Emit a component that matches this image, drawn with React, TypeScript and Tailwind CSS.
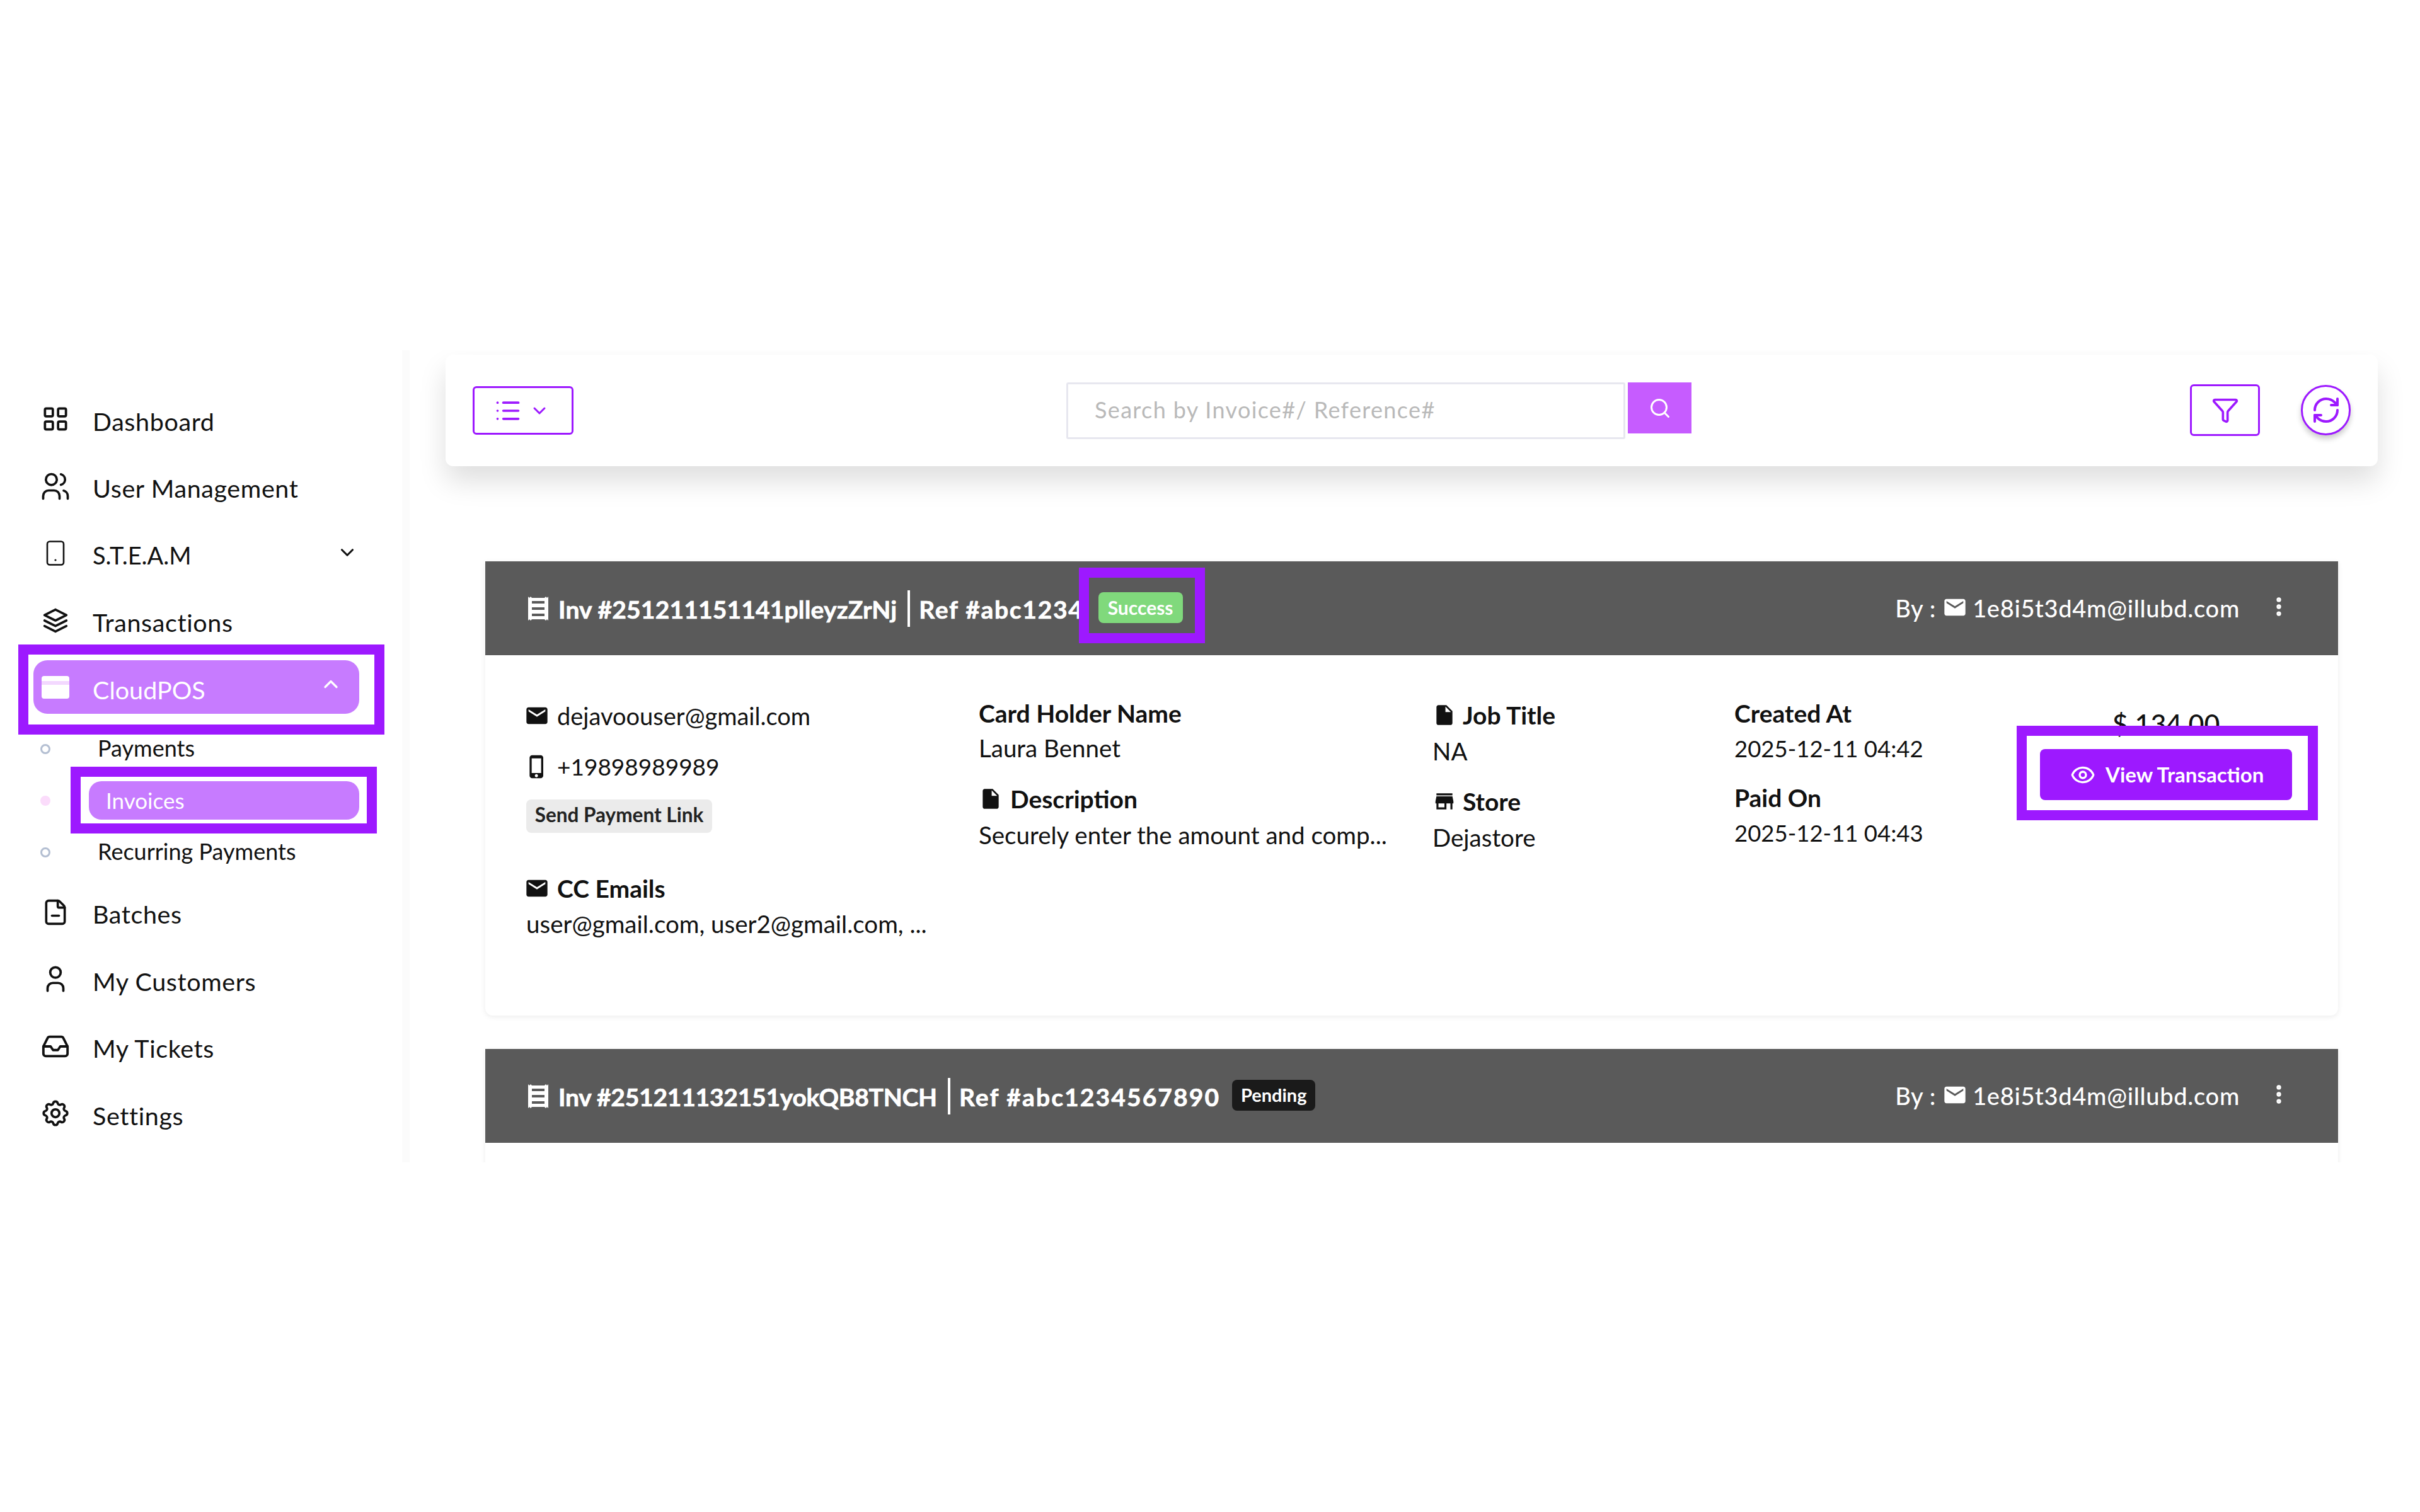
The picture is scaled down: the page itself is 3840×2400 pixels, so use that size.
import React from "react";
import { ChevronDown, ChevronUp, Eye, Funnel, Inbox, FileMinus, List, MoreVertical, RefreshCw, Search } from "lucide-react";
import { MdEmail, MdInsertDriveFile, MdPhoneIphone, MdStore } from "react-icons/md";
import { TbLayoutGrid, TbSettings, TbStack2, TbUser, TbUsers } from "react-icons/tb";

const font = "font-['Lato','Liberation_Sans',sans-serif]";

const DeviceIcon = () => (
  <svg viewBox="0 0 40 40" className="w-[40px] h-[40px]" fill="none" stroke="currentColor" strokeWidth="2.6">
    <rect x="7" y="1.5" width="26" height="37" rx="4" />
    <circle cx="20" cy="31" r="1.6" fill="currentColor" stroke="none" />
  </svg>
);

const CardIcon = () => (
  <svg viewBox="0 0 44 36" className="w-[44px] h-[36px]">
    <rect x="0" y="0" width="44" height="36" rx="4" fill="#fff" />
    <rect x="0" y="8" width="44" height="6" fill="#f3d8ff" />
  </svg>
);

const ReceiptIcon = () => (
  <svg viewBox="0 0 32 38" className="w-[32px] h-[38px] shrink-0" fill="#fff">
    <path d="M0 0l2 2 2-2 2 2h20l2-2 2 2 2-2v38l-2-2-2 2-2-2H6l-2 2-2-2-2 2z" />
    <rect x="6" y="7" width="20" height="4" fill="#5a5a5a" />
    <rect x="6" y="17" width="20" height="4" fill="#5a5a5a" />
    <rect x="6" y="27" width="20" height="4" fill="#5a5a5a" />
  </svg>
);

const NavRow = ({ icon, label, right, small }: { icon: React.ReactNode; label: string; right?: React.ReactNode; small?: boolean }) => (
  <div className="relative flex items-center h-[106.5px] pl-[64px] text-[#111]">
    <div className="w-[48px] h-[48px] flex items-center justify-center -mt-[6px]">{icon}</div>
    <span className={small ? "ml-[35px] text-[38px]" : "ml-[35px] text-[39.5px] tracking-[0.6px]"}>{label}</span>
    {right}
  </div>
);

const SubRow = ({ label, active }: { label: string; active?: boolean }) => (
  <div className="relative flex items-center h-[82px] text-[36px] text-[#111]">
    <span
      className={
        active
          ? "ml-[64px] w-[16px] h-[16px] rounded-full bg-[#fbdcfb]"
          : "ml-[64px] w-[16px] h-[16px] rounded-full border-[3px] border-[#b4bfd2]"
      }
    />
    {active ? (
      <div className="relative ml-[61px] w-[429px] h-[61px] rounded-[20px] bg-[#c77bff] flex items-center pl-[27px] text-[35px] text-white">
        Invoices
        <div className="absolute -left-[29px] -right-[28px] -top-[23px] -bottom-[22px] border-[16px] border-[#9d19ff]" />
      </div>
    ) : (
      <span className="ml-[75px] -mt-[3px]">{label}</span>
    )}
  </div>
);

const Sidebar = () => (
  <aside className="w-[650px] shrink-0 pt-[59px] border-r-[12px] border-[#fbfbfb]">
    <NavRow icon={<TbLayoutGrid size={50} strokeWidth={1.8} className="shrink-0" />} label="Dashboard" />
    <NavRow icon={<TbUsers size={52} strokeWidth={1.7} className="shrink-0" />} label="User Management" />
    <NavRow
      small
      icon={<DeviceIcon />}
      label="S.T.E.A.M"
      right={<ChevronDown size={34} strokeWidth={2.2} className="absolute left-[534px] top-[32px]" />}
    />
    <NavRow icon={<TbStack2 size={52} strokeWidth={1.7} className="shrink-0" />} label="Transactions" />
    <div className="relative h-[106.5px] text-white text-[39.5px]">
      <div className="absolute left-[53px] top-[7px] w-[517px] h-[85px] rounded-[22px] bg-[#c77bff] flex items-center pl-[13px]">
        <CardIcon />
        <span className="ml-[37px] mt-[8px]">CloudPOS</span>
        <ChevronUp size={36} strokeWidth={2.2} className="absolute left-[454px] top-[20px]" />
      </div>
      <div className="absolute left-[29px] top-[-18px] w-[581px] h-[143px] border-[16px] border-[#9d19ff]" />
    </div>
    <SubRow label="Payments" />
    <SubRow label="Invoices" active />
    <SubRow label="Recurring Payments" />
    <div className="mt-[4px]">
      <NavRow icon={<FileMinus size={44} strokeWidth={2} />} label="Batches" />
      <NavRow icon={<TbUser size={50} strokeWidth={1.8} className="shrink-0" />} label="My Customers" />
      <NavRow icon={<Inbox size={46} strokeWidth={2} />} label="My Tickets" />
      <NavRow icon={<TbSettings size={50} strokeWidth={1.8} className="shrink-0" />} label="Settings" />
    </div>
  </aside>
);

const Toolbar = () => (
  <div className="w-[3066px] h-[177px] rounded-[12px] bg-white shadow-[0_24px_44px_rgba(0,0,0,0.13)] relative flex items-center pl-[43px] pr-[43px]">
    <button className="w-[160px] h-[77px] rounded-[6px] border-[3px] border-[#9d19ff] text-[#9d19ff] flex items-center justify-center gap-[12px] pr-[4px]">
      <List size={44} strokeWidth={2} />
      <ChevronDown size={32} strokeWidth={2.2} />
    </button>
    <div className="ml-[782px] flex items-start mt-[1px]">
      <div className="w-[887px] h-[90px] border-[3px] border-[#e7e7ef] rounded-[3px] flex items-center pl-[42px] pb-[5px] text-[36px] tracking-[1.35px] text-[#b9b9b9]">
        Search by Invoice#/ Reference#
      </div>
      <div className="ml-[4px] w-[101px] h-[81px] bg-[#c65cff] flex items-center justify-center text-white">
        <Search size={36} strokeWidth={2} />
      </div>
    </div>
    <button className="ml-auto w-[111px] h-[82px] rounded-[6px] border-[3px] border-[#9d19ff] text-[#9d19ff] flex items-center justify-center -mt-[1px]">
      <Funnel size={44} strokeWidth={2} />
    </button>
    <button className="ml-[65px] w-[79px] h-[80px] rounded-full border-[3px] border-[#9d19ff] text-[#9d19ff] flex items-center justify-center shadow-[0_6px_8px_rgba(0,0,0,0.2)] -mt-[1px] bg-white">
      <RefreshCw size={48} strokeWidth={2} />
    </button>
  </div>
);

const CardHeader = ({ inv, invClass, rf, rfClass, badge }: { inv: string; invClass: string; rf: string; rfClass: string; badge: React.ReactNode }) => (
  <div className="h-[149px] bg-[#5a5a5a] flex items-center pl-[68px] text-white">
    <ReceiptIcon />
    <span className={`ml-[16px] mt-[4px] text-[39px] font-bold [-webkit-text-stroke:0.7px_white] whitespace-nowrap ${invClass}`}>{inv}</span>
    <span className="ml-[17px] w-[4px] h-[58px] bg-white" />
    <span className={`ml-[14px] mt-[4px] text-[39px] font-bold [-webkit-text-stroke:0.7px_white] whitespace-nowrap ${rfClass}`}>{rf}</span>
    {badge}
    <div className="ml-auto flex items-center text-[38px] tracking-[0.7px] font-medium pr-[75px] whitespace-nowrap">
      By :
      <MdEmail size={40} className="ml-[10px] -mt-[4px]" />
      <span className="ml-[8px]">1e8i5t3d4m@illubd.com</span>
      <MoreVertical size={38} strokeWidth={2.6} className="ml-[43px] -mt-[6px]" />
    </div>
  </div>
);

const Label = ({ icon, text }: { icon?: React.ReactNode; text: string }) => (
  <div className="h-[56px] flex items-center text-[39px] font-bold text-[#111] whitespace-nowrap">
    {icon}
    {text}
  </div>
);

const Value = ({ text, className }: { text: string; className?: string }) => (
  <div className={`h-[56px] flex items-center text-[38.5px] text-[#111] whitespace-nowrap ${className ?? ""}`}>{text}</div>
);

const DateValue = ({ text }: { text: string }) => (
  <div className="h-[56px] flex items-center text-[36.5px] text-[#111] whitespace-nowrap">{text}</div>
);

const FirstCard = () => (
  <div className="rounded-b-[12px] bg-white shadow-[0_2px_8px_rgba(0,0,0,0.08)]">
    <CardHeader
      inv="Inv #251211151141plleyzZrNj"
      invClass="tracking-[0.15px]"
      rf="Ref #abc1234"
      rfClass="tracking-[1.7px]"
      badge={
        <div className="relative ml-[23px] w-[134px] h-[49px] rounded-[8px] bg-[#80d97c] flex items-center justify-center text-[30px] font-bold text-white -mt-[3px]">
          Success
          <div className="absolute -left-[31px] -right-[35px] -top-[39px] -bottom-[32px] border-[16px] border-[#9d19ff]" />
        </div>
      }
    />
    <div className="h-[572px] flex">
      <div className="w-[783px] pl-[65px] pt-[68px]">
        <div className="h-[56px] flex items-center text-[38px] text-[#111]">
          <MdEmail size={40} className="-ml-[3px] mr-[12px]" />
          dejavoouser@gmail.com
        </div>
        <div className="mt-[25px] h-[56px] flex items-center text-[37px] text-[#111]">
          <MdPhoneIphone size={40} className="-ml-[3px] mr-[12px]" />
          +19898989989
        </div>
        <div className="mt-[24px] w-[295px] h-[53px] rounded-[8px] bg-[#ebebeb] flex items-center justify-center pb-[3px] text-[31.5px] font-bold text-[#222]">
          Send Payment Link
        </div>
        <div className="mt-[60px]">
          <Label icon={<MdEmail size={40} className="-ml-[3px] mr-[12px]" />} text="CC Emails" />
          <Value text="user@gmail.com, user2@gmail.com, ..." className="mt-[1px]" />
        </div>
      </div>
      <div className="w-[720px] pt-[64px]">
        <Label text="Card Holder Name" />
        <Value text="Laura Bennet" />
        <div className="mt-[24px]">
          <Label icon={<MdInsertDriveFile size={38} className="mr-[12px]" />} text="Description" />
          <Value text="Securely enter the amount and comp..." className="mt-[2px]" />
        </div>
      </div>
      <div className="w-[479px] pt-[67px]">
        <Label icon={<MdInsertDriveFile size={38} className="mr-[10px]" />} text="Job Title" />
        <Value text="NA" className="mt-[2px]" />
        <div className="mt-[23px]">
          <Label icon={<MdStore size={38} className="mr-[10px]" />} text="Store" />
          <Value text="Dejastore" className="mt-[2px] text-[37.5px]" />
        </div>
      </div>
      <div className="w-[485px] pt-[64px]">
        <Label text="Created At" />
        <DateValue text="2025-12-11 04:42" />
        <div className="mt-[22px]">
          <Label text="Paid On" />
          <DateValue text="2025-12-11 04:43" />
        </div>
      </div>
      <div className="w-[400px] pt-[81px]">
        <div className="h-[56px] flex items-center justify-center text-[43px] font-medium text-[#111]">$ 134.00</div>
        <div className="relative mt-[12px] h-[81px] rounded-[8px] bg-[#9d19ff] flex items-center pl-[48px] text-white text-[33px] font-bold">
          <Eye size={40} strokeWidth={2} />
          <span className="ml-[16px]">View Transaction</span>
          <div className="absolute -left-[37px] -right-[41px] -top-[37px] -bottom-[32px] border-[16px] border-[#9d19ff]" />
        </div>
      </div>
    </div>
  </div>
);

const SecondCard = () => (
  <div className="mt-[53px] bg-white shadow-[0_2px_8px_rgba(0,0,0,0.08)]">
    <CardHeader
      inv="Inv #251211132151yokQB8TNCH"
      invClass="tracking-[-0.25px]"
      rf="Ref #abc1234567890"
      rfClass="tracking-[2.1px]"
      badge={
        <div className="ml-[19px] w-[132px] h-[49px] rounded-[8px] bg-[#1a1a1a] flex items-center justify-center text-[29px] font-bold text-white -mt-[3px]">
          Pending
        </div>
      }
    />
    <div className="h-[60px]" />
  </div>
);

export default function App() {
  return (
    <div className={`${font} w-[3840px] h-[2400px] bg-white pt-[556px]`}>
      <div className="flex h-[1289px] overflow-hidden">
        <Sidebar />
        <main className="flex-1 pl-[57px] pt-[7px]">
          <Toolbar />
          <div className="mt-[151px] ml-[63px] w-[2940px]">
            <FirstCard />
            <SecondCard />
          </div>
        </main>
      </div>
    </div>
  );
}
